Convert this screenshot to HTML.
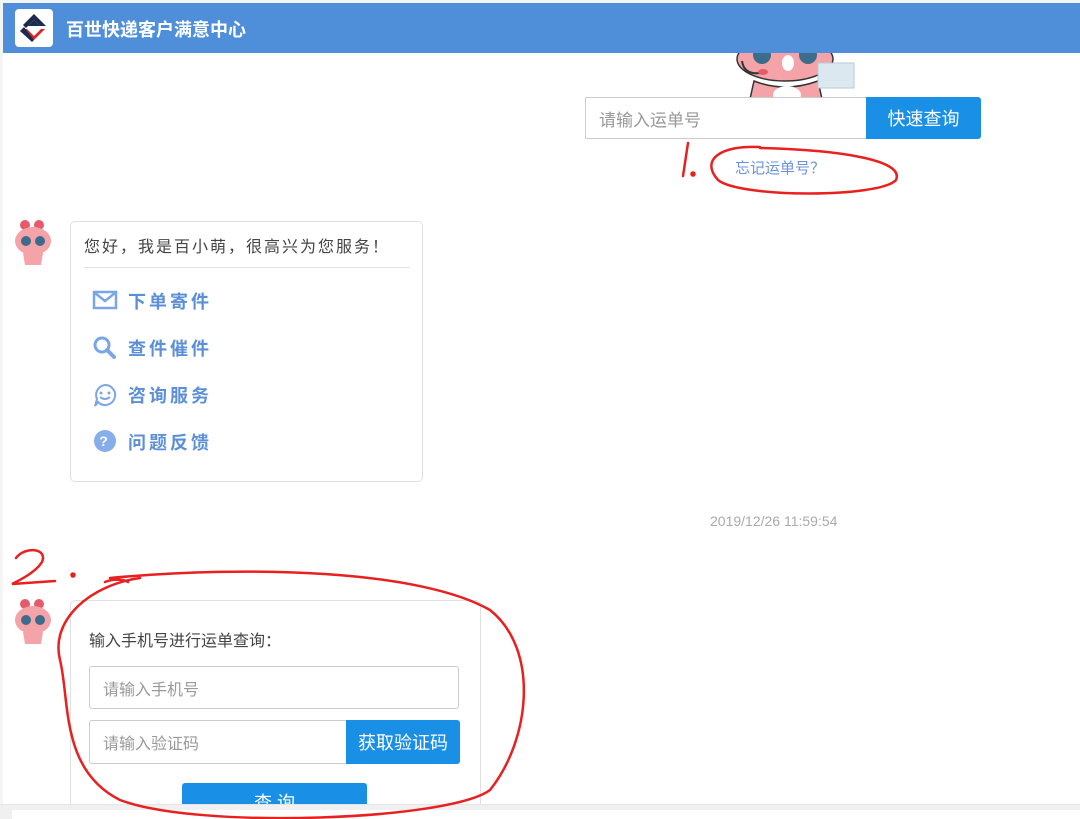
<!DOCTYPE html>
<html><head><meta charset="utf-8"><style>
*{margin:0;padding:0;box-sizing:border-box}
html{width:1080px;height:819px;overflow:hidden}
body{width:1080px;height:819px;overflow:hidden;background:#fff;position:relative;font-family:"Liberation Sans","Noto Sans CJK SC",sans-serif}
.a{position:absolute}
.hdr{left:3px;top:3px;width:1077px;height:50px;background:#4f8fd9}
.logo{left:15px;top:9px;width:38px;height:38px;background:#fff;border-radius:4px}
.ttl{left:66px;top:16px;color:#fff;font-size:18px;font-weight:bold}
.inp{border:1px solid #ccc;color:#999;font-size:16px;padding-left:13px;display:flex;align-items:center;background:#fff}
.btn{background:#1a8fe6;color:#fff;display:flex;align-items:center;justify-content:center;font-size:18px;border-radius:0 3px 3px 0}
.bub{border:1px solid #e0e0e0;border-radius:5px;background:#fff}
.item{left:92px;font-size:18px;font-weight:bold;color:#5b8fd6;letter-spacing:3px}
.item span{position:absolute;left:36px;top:0;white-space:nowrap}
</style></head><body>
<div class="a" style="left:0;top:0;width:1080px;height:3px;background:#f4f4f4"></div>
<div class="a" style="left:0;top:0;width:3px;height:819px;background:#f4f4f4"></div>
<div class="a hdr"></div>
<div class="a logo"><svg width="38" height="38" viewBox="0 0 38 38"><path d="M19 5 L31 17 L25 17 L19 11 L11 19 L8 16Z" fill="#1b2a4e"/><path d="M8 20 L19 31 L30 20 L26 20 L19 27 L12 20Z" fill="#d8232a"/><path d="M19 11 L25 17 L13 17Z" fill="#1b2a4e"/><path d="M9 18 L5 22 L17 33 L19 31Z" fill="#1b2a4e"/></svg></div>
<div class="a ttl">百世快递客户满意中心</div>
<svg class="a" style="left:730px;top:53px" width="130" height="46">
<ellipse cx="55" cy="6" rx="48" ry="22" fill="#f4a3a8" stroke="#333" stroke-width="1.5"/>
<circle cx="32" cy="2" r="9" fill="#3d6b8a"/><circle cx="78" cy="2" r="9" fill="#3d6b8a"/>
<ellipse cx="58" cy="10" rx="6" ry="8" fill="#fff"/>
<path d="M24 28 Q55 40 88 28 L92 46 L20 46Z" fill="#f4a3a8" stroke="#333" stroke-width="1.5"/>
<ellipse cx="57" cy="42" rx="14" ry="9" fill="#fff"/>
<path d="M12 8 Q14 22 30 20" stroke="#333" stroke-width="2" fill="none"/>
<ellipse cx="33" cy="19" rx="5" ry="3" fill="#e65b6b"/>
<rect x="88" y="10" width="36" height="25" fill="#dce8ef" stroke="#b6cbd6"/>
</svg>
<div class="a inp" style="left:585px;top:97px;width:282px;height:42px;font-size:17px">请输入运单号</div>
<div class="a btn" style="left:866px;top:97px;width:115px;height:42px">快速查询</div>
<div class="a" style="left:735px;top:157px;font-size:15px;color:#6a93d8">忘记运单号？</div>
<svg class="a" style="left:11px;top:219px" width="46" height="48"><circle cx="14" cy="6" r="5" fill="#e65b6b"/><circle cx="28" cy="6" r="5" fill="#e65b6b"/><ellipse cx="22" cy="22" rx="18" ry="14" fill="#f4a3a8"/><circle cx="15" cy="22" r="5" fill="#3d6b8a"/><circle cx="29" cy="22" r="5" fill="#3d6b8a"/><path d="M12 34 L32 34 L30 46 L14 46Z" fill="#f4a3a8"/></svg>
<div class="a bub" style="left:70px;top:221px;width:353px;height:261px"></div>
<div class="a" style="left:84px;top:233px;font-size:16px;color:#444;letter-spacing:2px">您好，我是百小萌，很高兴为您服务！</div>
<div class="a" style="left:84px;top:267px;width:326px;height:1px;background:#e3e3e3"></div>
<div class="a item" style="top:288px"><svg width="26" height="24"><rect x="2" y="4" width="22" height="16" fill="none" stroke="#7aa6e6" stroke-width="2.5"/><path d="M3 5 L13 13 L23 5" fill="none" stroke="#7aa6e6" stroke-width="2.5"/></svg><span>下单寄件</span></div>
<div class="a item" style="top:335px"><svg width="26" height="26"><circle cx="10" cy="10" r="7" fill="none" stroke="#7aa6e6" stroke-width="3"/><path d="M15 15 L22 22" stroke="#7aa6e6" stroke-width="4" stroke-linecap="round"/></svg><span>查件催件</span></div>
<div class="a item" style="top:382px"><svg width="26" height="26"><path d="M13 3 A10 10 0 1 1 6 20 L3 24 L5 17 A10 10 0 0 1 13 3Z" fill="none" stroke="#7aa6e6" stroke-width="2"/><circle cx="9" cy="11" r="1.5" fill="#7aa6e6"/><circle cx="17" cy="11" r="1.5" fill="#7aa6e6"/><path d="M8 15 Q13 19 18 15" fill="none" stroke="#7aa6e6" stroke-width="2"/></svg><span>咨询服务</span></div>
<div class="a item" style="top:429px"><svg width="26" height="26"><circle cx="13" cy="12" r="11" fill="#86aeea"/><text x="13" y="17" font-size="14" fill="#fff" text-anchor="middle" font-family="Liberation Sans">?</text></svg><span>问题反馈</span></div>
<div class="a" style="left:710px;top:513px;font-size:14px;color:#aaa">2019/12/26 11:59:54</div>
<svg class="a" style="left:11px;top:598px" width="46" height="48"><circle cx="14" cy="6" r="5" fill="#e65b6b"/><circle cx="28" cy="6" r="5" fill="#e65b6b"/><ellipse cx="22" cy="22" rx="18" ry="14" fill="#f4a3a8"/><circle cx="15" cy="22" r="5" fill="#3d6b8a"/><circle cx="29" cy="22" r="5" fill="#3d6b8a"/><path d="M12 34 L32 34 L30 46 L14 46Z" fill="#f4a3a8"/></svg>
<div class="a bub" style="left:70px;top:600px;width:411px;height:230px"></div>
<div class="a" style="left:89px;top:627px;font-size:16px;color:#444">输入手机号进行运单查询：</div>
<div class="a inp" style="left:89px;top:666px;width:370px;height:43px;border-radius:3px">请输入手机号</div>
<div class="a inp" style="left:89px;top:720px;width:258px;height:44px;border-radius:3px 0 0 3px">请输入验证码</div>
<div class="a btn" style="left:346px;top:720px;width:114px;height:44px">获取验证码</div>
<div class="a btn" style="left:182px;top:783px;width:185px;height:30px;border-radius:3px;align-items:flex-start;padding-top:6px">查 询</div>
<div class="a" style="left:0;top:804px;width:1080px;height:15px;background:#f0f0f0;border-top:1px solid #e5e5e5"></div>
<div class="a" style="left:12px;top:810px;width:1068px;height:9px;background:#fff"></div>
<svg class="a" style="left:0;top:0" width="1080" height="819" fill="none" stroke="#e8201f" stroke-width="2.5" stroke-linecap="round">
<path d="M688 143 L683 176"/><circle cx="693" cy="174" r="1.5" fill="#e8201f"/>
<path d="M760 147 C720 145 700 160 718 180 C740 198 880 198 896 180 C905 160 840 150 760 148"/>
<path d="M16 558 C25 546 48 548 42 562 C36 572 20 580 12 584 L55 581"/><circle cx="73" cy="575" r="1.5" fill="#e8201f"/>
<path d="M105 582 C115 578 125 580 128 582"/>
<path d="M110 578 C250 565 420 570 490 610 C540 650 530 740 490 790 C450 820 200 830 120 800 C60 770 70 700 60 660 C50 620 90 585 140 578"/>
</svg>
</body></html>
